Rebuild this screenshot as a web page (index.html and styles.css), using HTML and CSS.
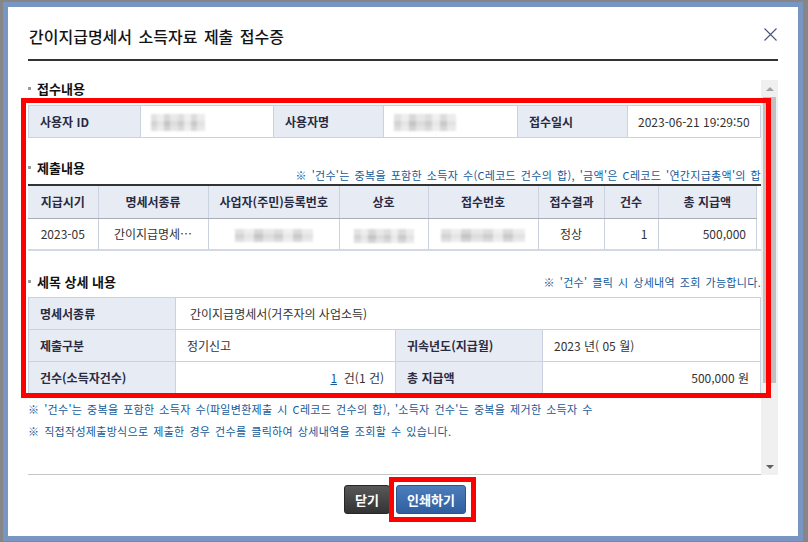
FILE: index.html
```html
<!DOCTYPE html>
<html lang="ko">
<head>
  <meta charset="UTF-8">
  <title>간이지급명세서 소득자료 제출 접수증</title>
  <meta name="viewport" content="width=device-width, initial-scale=1.0">
  <link rel="stylesheet" href="styles.css">
</head>
<body>
  <div class="popup">
    <div class="popup-head">
      <h1>간이지급명세서 소득자료 제출 접수증</h1>
      <button class="close-btn" title="닫기">
        <svg width="13" height="13" viewBox="0 0 13 13"><path d="M0.5 0.5 L12.5 12.5 M12.5 0.5 L0.5 12.5" stroke="#4b5474" stroke-width="1.1" fill="none"/></svg>
      </button>
    </div>

    <div class="scroll-box">
      <div class="scroll-content">
        <!-- 접수내용 -->
        <div class="sec-head">
          <h3>접수내용</h3>
        </div>
        <table class="tbl tbl-info">
          <colgroup>
            <col class="c112"><col class="c133"><col class="c110"><col class="c134"><col class="c110"><col>
          </colgroup>
          <tr>
            <th>사용자 ID</th>
            <td><span class="masked m-id"></span></td>
            <th>사용자명</th>
            <td><span class="masked m-name"></span></td>
            <th>접수일시</th>
            <td>2023-06-21 19:29:50</td>
          </tr>
        </table>

        <!-- 제출내용 -->
        <div class="sec-head sec-gap">
          <h3>제출내용</h3>
          <p class="sec-note">※ '건수'는 중복을 포함한 소득자 수(C레코드 건수의 합), '금액'은 C레코드 '연간지급총액'의 합</p>
        </div>
        <div class="tbl-wrap">
          <table class="tbl tbl-list">
            <colgroup>
              <col class="c70"><col class="c110"><col class="c131"><col class="c89"><col class="c110"><col class="c66"><col class="c54"><col>
            </colgroup>
            <thead>
              <tr>
                <th>지급시기</th>
                <th>명세서종류</th>
                <th>사업자(주민)등록번호</th>
                <th>상호</th>
                <th>접수번호</th>
                <th>접수결과</th>
                <th>건수</th>
                <th>총 지급액</th>
              </tr>
            </thead>
            <tbody>
              <tr>
                <td>2023-05</td>
                <td>간이지급명세…</td>
                <td><span class="masked m-regno"></span></td>
                <td><span class="masked m-corp"></span></td>
                <td><span class="masked m-recv"></span></td>
                <td>정상</td>
                <td class="num">1</td>
                <td class="num">500,000</td>
              </tr>
            </tbody>
          </table>
        </div>

        <!-- 세목 상세 내용 -->
        <div class="sec-head sec-gap2 top">
          <h3>세목 상세 내용</h3>
          <p class="sec-note">※ '건수' 클릭 시 상세내역 조회 가능합니다.</p>
        </div>
        <table class="tbl tbl-detail">
          <colgroup>
            <col class="c147"><col class="c220"><col class="c147"><col>
          </colgroup>
          <tr>
            <th>명세서종류</th>
            <td colspan="3" class="pad-l">간이지급명세서(거주자의 사업소득)</td>
          </tr>
          <tr>
            <th>제출구분</th>
            <td>정기신고</td>
            <th>귀속년도(지급월)</th>
            <td>2023 년( 05 월)</td>
          </tr>
          <tr>
            <th>건수(소득자건수)</th>
            <td class="num"><a href="#" class="cnt-link">1</a>&nbsp; 건(1 건)</td>
            <th>총 지급액</th>
            <td class="num">500,000 원</td>
          </tr>
        </table>

        <div class="notes">
          <p>※ '건수'는 중복을 포함한 소득자 수(파일변환제출 시 C레코드 건수의 합), '소득자 건수'는 중복을 제거한 소득자 수</p>
          <p>※ 직접작성제출방식으로 제출한 경우 건수를 클릭하여 상세내역을 조회할 수 있습니다.</p>
        </div>
      </div>
      <div class="scrollbar">
        <span class="sb-btn"><i class="arrow-up"></i></span>
        <span class="sb-thumb"></span>
        <span class="sb-space"></span>
        <span class="sb-btn"><i class="arrow-down"></i></span>
      </div>
    </div>

    <div class="popup-foot">
      <button class="btn btn-dark">닫기</button>
      <button class="btn btn-blue">인쇄하기</button>
    </div>

    <!-- highlight marks -->
    <div class="mark mark-main"></div>
    <div class="mark mark-print"></div>
  </div>
</body>
</html>
```

FILE: styles.css
```css
* { box-sizing: border-box; }
body {
  margin: 0;
  background: #868686;
  font-family: "Noto Sans CJK KR", "Liberation Sans", sans-serif;
  font-size: 12px;
  color: #333;
}

.popup {
  position: relative;
  width: 800px;
  height: 539px;
  margin: 2px 0 0 3px;
  border: 5px solid #7896c1;
  background: #fff;
  padding: 0 20px;
}

/* header */
.popup-head {
  display: flex;
  justify-content: space-between;
  align-items: flex-start;
  padding: 19px 0 13px;
  border-bottom: 2px solid #333;
}
.popup-head h1 {
  margin: 0;
  padding-left: 1px;
  font-size: 16px;
  font-weight: 500;
  line-height: 20px;
  color: #141414;
  word-spacing: 2px;
}
.close-btn {
  border: 0; background: none; padding: 0;
  width: 13px; height: 13px;
  margin: 2px 1px 0 0;
  cursor: pointer;
}
.close-btn svg { display: block; }

/* scroll area */
.scroll-box { display: flex; height: 395px; margin-top: 19px; }
.scroll-content {
  flex: 1;
  overflow: hidden;
  border-bottom: 1px solid #c6c6c6;
}
.scrollbar {
  width: 17px;
  background: #f0f0f0;
  display: flex;
  flex-direction: column;
  align-items: center;
}
.sb-btn { height: 17px; width: 17px; display: flex; align-items: center; justify-content: center; }
.sb-thumb { width: 13px; height: 286px; background: #c1c1c1; }
.sb-space { flex: 1; }
.arrow-up { border-left: 4px solid transparent; border-right: 4px solid transparent; border-bottom: 4px solid #a3a3a3; }
.arrow-down { border-left: 4px solid transparent; border-right: 4px solid transparent; border-top: 4px solid #606060; }

/* section heads */
.sec-head {
  display: flex;
  justify-content: space-between;
  align-items: flex-end;
  height: 25px;
}
.sec-head.top { align-items: flex-start; height: 24px; }
.sec-gap { margin-top: 21px; }
.sec-gap2 { margin-top: 22px; }
.sec-head h3 {
  position: relative;
  align-self: flex-start;
  margin: 0;
  padding-left: 9px;
  font-size: 13px;
  font-weight: bold;
  line-height: 18px;
  color: #111;
}
.sec-head h3::before {
  content: "";
  position: absolute;
  left: 0; top: 7px;
  width: 3px; height: 3px;
  background: #9a9a9a;
}
.sec-note {
  margin: 0 0 1px;
  font-size: 11px;
  line-height: 16px;
  color: #135a9a;
  letter-spacing: 0.3px;
  word-spacing: 1.5px;
}
.sec-head.top .sec-note { margin: 1px 0 0; }

/* tables */
.tbl { width: 100%; border-collapse: collapse; table-layout: fixed; }
.tbl th, .tbl td {
  height: 32px;
  padding: 0 11px;
  border: 1px solid #c9d2de;
  white-space: nowrap;
  overflow: hidden;
}
.tbl th {
  background: #e7ecf4;
  color: #2a2a40;
  font-weight: bold;
  text-align: left;
}
.tbl td { color: #333; }
.tbl .num { text-align: right; }
.tbl-info td { padding: 0 10px; }

.c54 { width: 54px; } .c66 { width: 66px; } .c70 { width: 70px; } .c89 { width: 89px; }
.c110 { width: 110px; } .c112 { width: 112px; } .c131 { width: 131px; } .c133 { width: 133px; }
.c134 { width: 134px; } .c147 { width: 147px; } .c220 { width: 220px; }

.tbl-wrap { border-top: 2px solid #333; border-bottom: 2px solid #d2d9e3; }
.tbl-list { width: calc(100% - 4px); }
.tbl-list th, .tbl-list td { border-width: 0 1px; text-align: center; }
.tbl-list th:first-child, .tbl-list td:first-child { border-left: 0; }
.tbl-list th { height: 32px; border-bottom: 1px solid #a9adb5; }
.tbl-list td { height: 31px; }
.tbl-list td.num { text-align: right; padding-right: 10px; }

.tbl-detail th { padding: 0 11px; }
.tbl-detail td { padding: 0 11px; }
.tbl-detail td.pad-l { padding-left: 14px; }
.cnt-link { color: #1a5c9a; }

/* masked values */
.masked {
  display: inline-block;
  vertical-align: middle;
  height: 15px;
  background:
    linear-gradient(180deg, rgba(255,255,255,0.35) 0 40%, rgba(0,0,0,0) 40% 70%, rgba(255,255,255,0.25) 70%),
    linear-gradient(90deg, #d3d3d3 0 12%, #e5e5e5 12% 24%, #c4c4c4 24% 36%, #dcdcdc 36% 50%, #cdcdcd 50% 62%, #e8e8e8 62% 74%, #c9c9c9 74% 86%, #e2e2e2 86%);
  filter: blur(1px);
}
.m-id { width: 54px; height: 17px; }
.m-name { width: 62px; height: 17px; }
.m-regno { width: 78px; height: 13px; }
.m-corp { width: 60px; height: 14px; }
.m-recv { width: 84px; height: 13px; }

/* notes */
.notes { margin-top: 4px; }
.notes p {
  margin: 0;
  font-size: 11px;
  line-height: 22px;
  color: #135a9a;
  letter-spacing: 0.3px;
  word-spacing: 1.5px;
}

/* footer */
.popup-foot {
  display: flex;
  justify-content: center;
  gap: 6px;
  margin-top: 10px;
  padding-left: 4px;
}
.btn {
  height: 29px;
  padding: 0 10px;
  border-radius: 3px;
  font-family: inherit;
  font-size: 13px;
  font-weight: bold;
  color: #fff;
  cursor: pointer;
}
.btn-dark { background: linear-gradient(#585858, #333); border: 1px solid #262626; }
.btn-blue { background: linear-gradient(#4d7dbb, #2f5f9e); border: 1px solid #2a5690; }

/* red highlight marks */
.mark { position: absolute; border: 5px solid #ff0000; pointer-events: none; }
.mark-main { left: 13px; top: 91px; width: 750px; height: 300px; }
.mark-print { left: 381px; top: 470px; width: 87px; height: 45px; }
```
